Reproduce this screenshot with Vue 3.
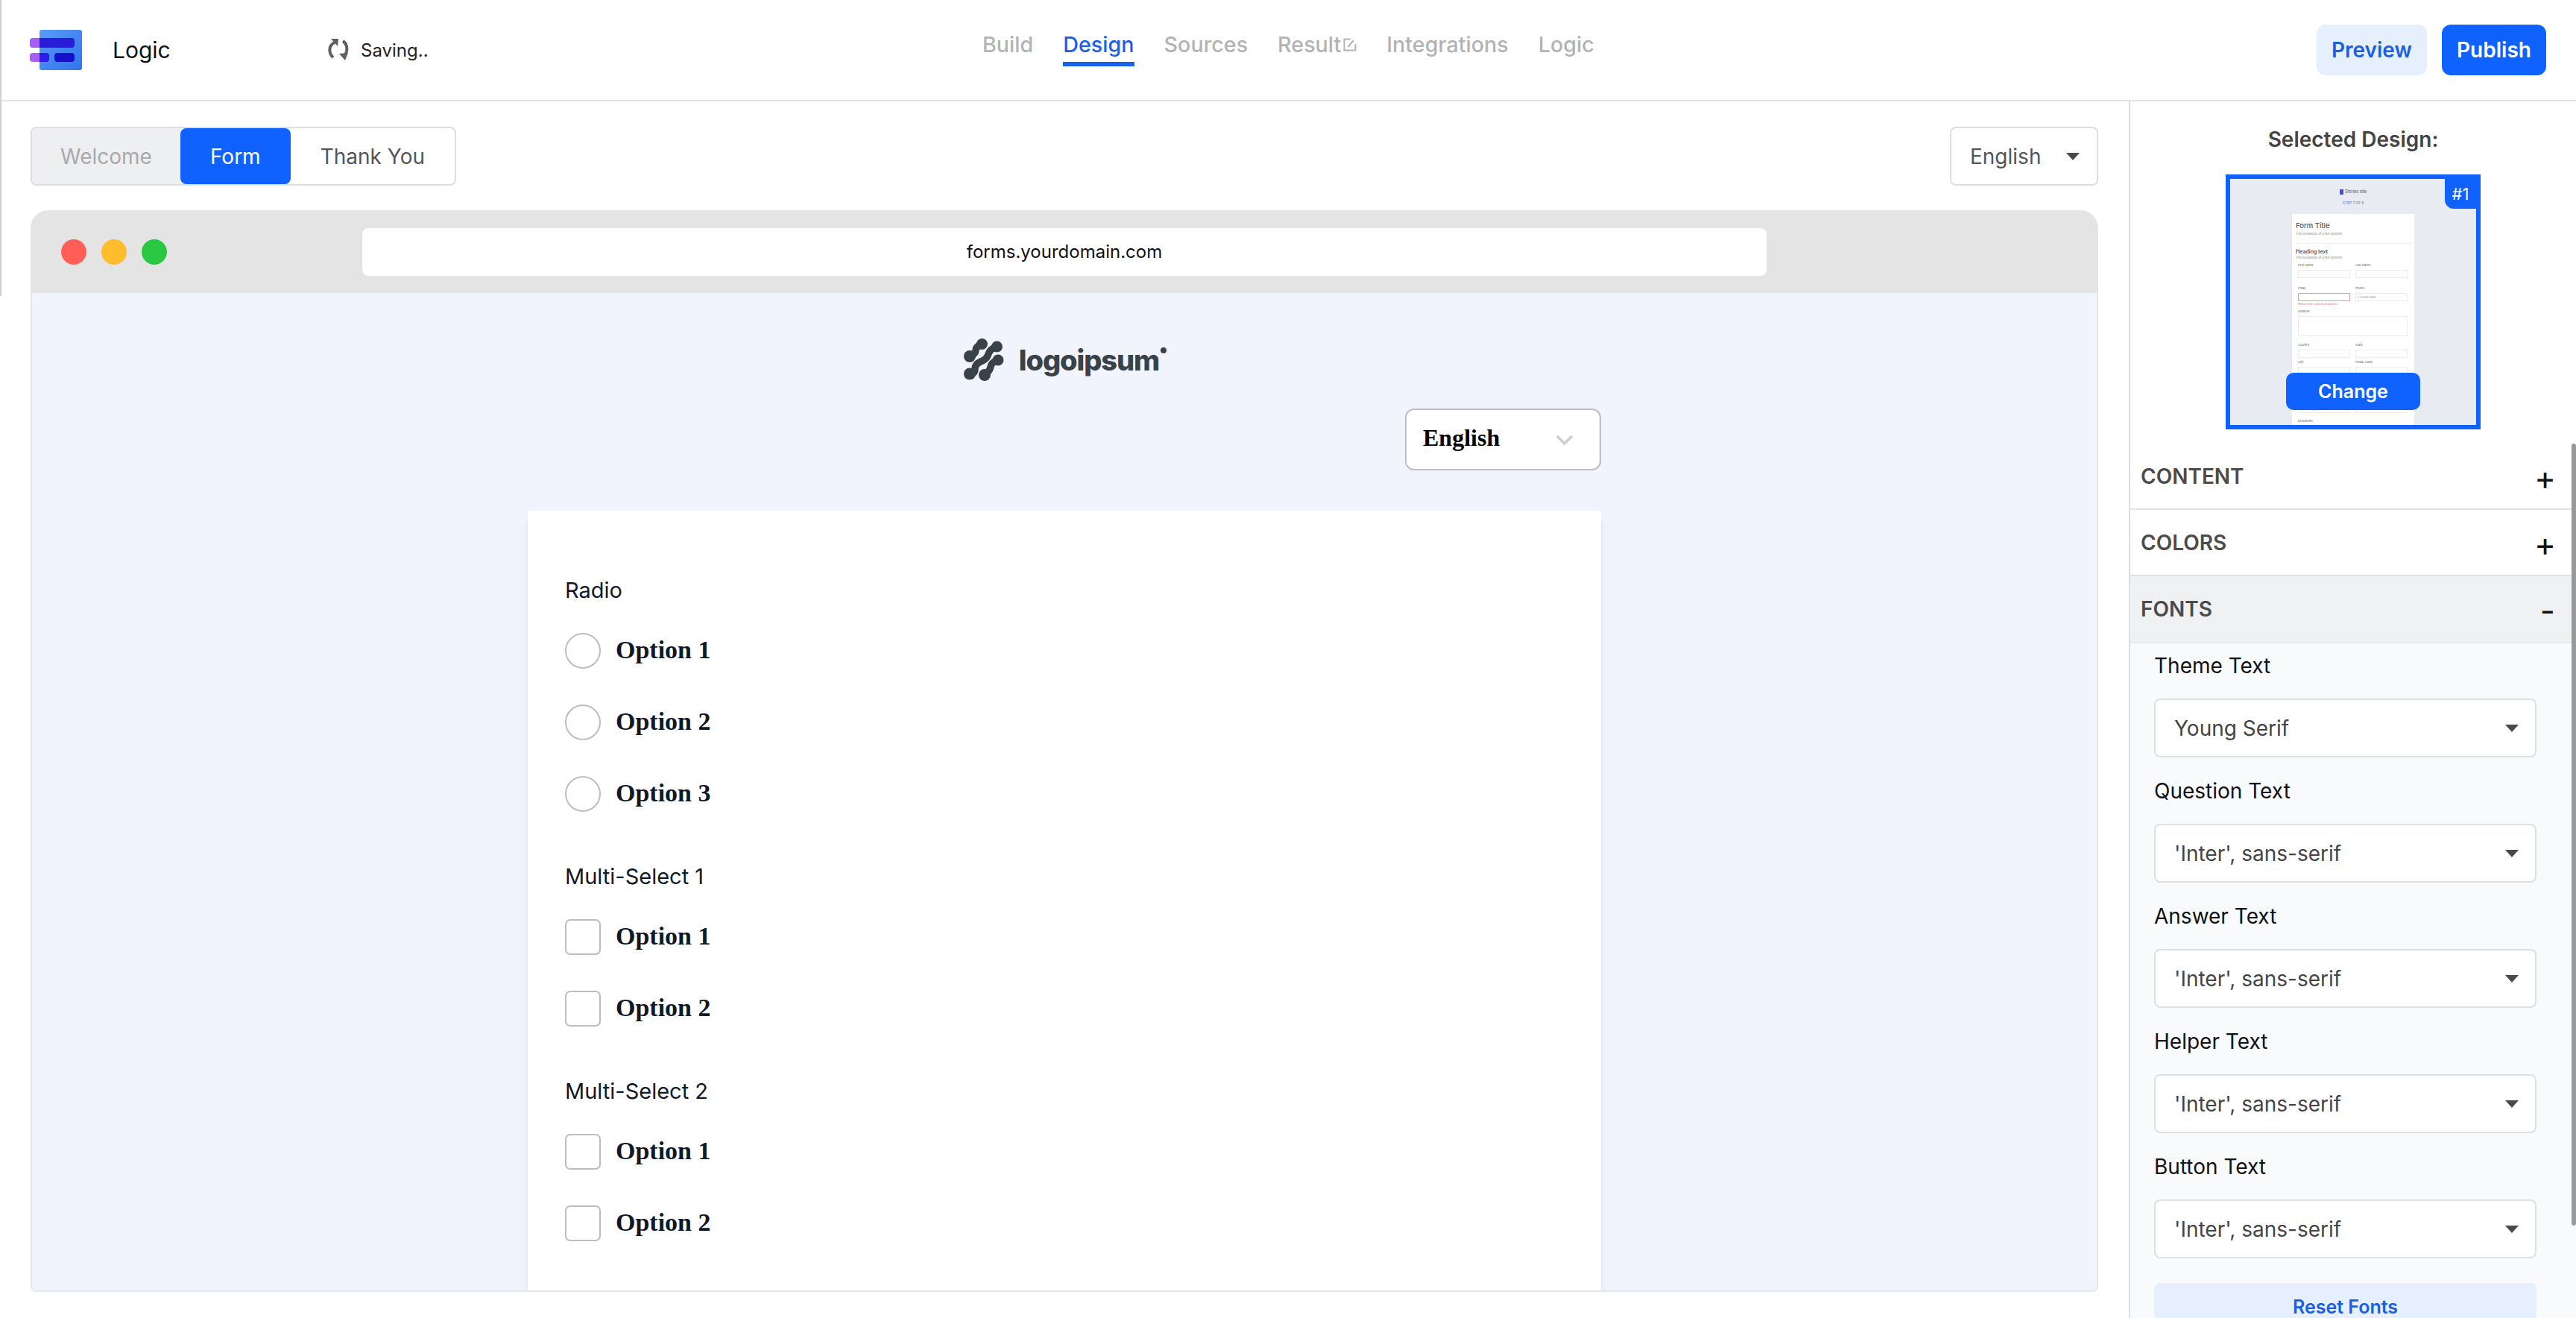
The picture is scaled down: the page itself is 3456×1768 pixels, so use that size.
<template>
  <div class="app">
    <span class="edge-line" />

    <!-- Top bar -->
    <header class="topbar">
      <div class="brand-area">
        <svg class="brand-logo" width="70" height="54" viewBox="0 0 70 54">
          <defs>
            <linearGradient id="brandBlue" x1="0" y1="0" x2="1" y2="1">
              <stop offset="0" stop-color="#5b9bf8" />
              <stop offset="1" stop-color="#2f74ec" />
            </linearGradient>
          </defs>
          <rect x="13" y="0" width="57" height="54" rx="3" fill="url(#brandBlue)" />
          <path d="M13 11H4a4 4 0 0 0-4 4v5a4 4 0 0 0 4 4h9z" fill="#a65ff4" />
          <path d="M13 31H4a4 4 0 0 0-4 4v4a4 4 0 0 0 4 4h9z" fill="#a65ff4" />
          <path d="M13 11h43a4 4 0 0 1 4 4v5a4 4 0 0 1-4 4H13z" fill="#2a1cd8" />
          <path d="M13 31h9a4 4 0 0 1 4 4v4a4 4 0 0 1-4 4H13z" fill="#2f1cec" />
          <rect x="33" y="31" width="27" height="12" rx="4" fill="#1410cc" />
        </svg>
        <span class="brand-name">Logic</span>
        <svg class="save-icon" width="30" height="30" viewBox="0 0 30 30" fill="none">
          <path d="M10 5C1 9 2 20 8 25" stroke="#5f5f5f" stroke-width="4" />
          <path d="M5 0h10l-1 10z" fill="#5f5f5f" />
          <path d="M21 3c7 5 7 15 1 21" stroke="#5f5f5f" stroke-width="4" />
          <path d="M16 20l12-1-4 10z" fill="#5f5f5f" />
        </svg>
        <span class="save-text">Saving..</span>
      </div>

      <nav class="main-nav">
        <a
          v-for="item in navItems"
          :key="item"
          class="nav-link"
          :class="{ active: item === 'Design' }"
        >
          {{ item }}
          <svg v-if="item === 'Result'" class="ext-icon" width="18" height="18" viewBox="0 0 18 18" fill="none">
            <path d="M10 1.500H1.500v15h15V8" stroke="#b4b4b4" stroke-width="2" />
            <path d="M6.500 12L14 3" stroke="#b4b4b4" stroke-width="2" />
          </svg>
        </a>
      </nav>

      <div class="top-actions">
        <button class="btn btn-soft">Preview</button>
        <button class="btn btn-solid">Publish</button>
      </div>
    </header>

    <div class="workspace">
      <main class="canvas-col">
        <div class="canvas-tools">
          <div class="step-tabs">
            <span class="step welcome">Welcome</span>
            <span class="step current">Form</span>
            <span class="step">Thank You</span>
          </div>
          <div class="lang-select">
            <span>English</span>
            <i class="caret" />
          </div>
        </div>

        <!-- Browser mock -->
        <section class="browser">
          <div class="browser-bar">
            <span class="dot red" />
            <span class="dot amber" />
            <span class="dot green" />
            <div class="url-box">forms.yourdomain.com</div>
          </div>

          <div class="browser-body">
            <div class="form-logo">
              <svg width="66" height="66" viewBox="0 0 66 66" fill="#394149" stroke="#394149">
                <g stroke-width="9.500" stroke-linecap="round">
                  <path d="M31.500 11.500Q23 15 23 20T15 28" fill="none" />
                  <path d="M51.500 15Q42 18 40 25T30 35T22 45T15 51.500" fill="none" />
                  <path d="M53 33Q44 36 43 42T35 53" fill="none" />
                </g>
                <g stroke="none">
                  <circle cx="31.500" cy="11.500" r="7.500" />
                  <circle cx="15" cy="28" r="8" />
                  <circle cx="51.500" cy="15" r="7.500" />
                  <circle cx="15" cy="51.500" r="8" />
                  <circle cx="53" cy="33" r="7.500" />
                  <circle cx="35" cy="53" r="8" />
                </g>
              </svg>
              <span class="logo-word">logoipsum</span>
              <span class="logo-dot" />
            </div>

            <div class="form-lang-wrap">
              <div class="form-lang">
                <span>English</span>
                <svg width="26" height="16" viewBox="0 0 26 16" fill="none">
                  <path d="M3 3l10 10L23 3" stroke="#cdcdcd" stroke-width="3.500" />
                </svg>
              </div>
            </div>

            <div class="form-card">
              <div v-for="group in formGroups" :key="group.label" class="form-group">
                <div class="group-label">{{ group.label }}</div>
                <div class="option-list">
                  <label v-for="opt in group.options" :key="opt" class="option-row">
                    <span class="mark" :class="group.type" />
                    <span class="option-text">{{ opt }}</span>
                  </label>
                </div>
              </div>
            </div>
          </div>
        </section>
      </main>

      <!-- Design sidebar -->
      <aside class="sidebar">
        <span class="scroll-thumb" />
        <h4 class="side-title">Selected Design:</h4>

        <div class="design-thumb">
          <span class="thumb-badge">#1</span>
          <button class="thumb-change">Change</button>
          <div class="mini-brand"><i class="mini-logo" />Stories site</div>
          <div class="mini-step"><b>STEP</b> 1 OF 5</div>
          <div class="mini-card">
            <div class="mini-title">Form Title</div>
            <div class="mini-sub">This is example of a text element</div>
            <div class="mini-rule" />
            <div class="mini-heading">Heading text</div>
            <div class="mini-sub flush">This is example of a text element</div>
            <div class="mini-grid">
              <div v-for="f in miniFields" :key="f.label" class="mini-field" :class="f.cls">
                <div class="mini-label">{{ f.label }}</div>
                <div class="mini-input">{{ f.value }}</div>
                <div v-if="f.error" class="mini-error">{{ f.error }}</div>
              </div>
            </div>
          </div>
        </div>

        <div class="panel-row"><span>CONTENT</span><b class="plus">+</b></div>
        <div class="panel-row"><span>COLORS</span><b class="plus">+</b></div>
        <div class="panel-row open"><span>FONTS</span><b class="minus">-</b></div>

        <div class="panel-body">
          <div v-for="row in fontRows" :key="row.label" class="font-field">
            <div class="font-label">{{ row.label }}</div>
            <div class="font-select">
              <span>{{ row.value }}</span>
              <i class="caret" />
            </div>
          </div>
          <button class="reset-btn">Reset Fonts</button>
        </div>
      </aside>
    </div>
  </div>
</template>

<script setup>
const navItems = ['Build', 'Design', 'Sources', 'Result', 'Integrations', 'Logic']

const formGroups = [
  { label: 'Radio', type: 'round', options: ['Option 1', 'Option 2', 'Option 3'] },
  { label: 'Multi-Select 1', type: 'square', options: ['Option 1', 'Option 2'] },
  { label: 'Multi-Select 2', type: 'square', options: ['Option 1', 'Option 2'] }
]

const fontRows = [
  { label: 'Theme Text', value: 'Young Serif' },
  { label: 'Question Text', value: "'Inter', sans-serif" },
  { label: 'Answer Text', value: "'Inter', sans-serif" },
  { label: 'Helper Text', value: "'Inter', sans-serif" },
  { label: 'Button Text', value: "'Inter', sans-serif" }
]

// tiny form inside the design thumbnail
const miniFields = [
  { label: 'First Name' },
  { label: 'Last Name' },
  { label: 'Email', cls: 'bad', error: 'Please enter valid email address' },
  { label: 'Phone', value: '+1 (555) 000' },
  { label: 'Address', cls: 'wide' },
  { label: 'Country', cls: 'tight' },
  { label: 'State', cls: 'tight' },
  { label: 'City', cls: 'tall' },
  { label: 'Postal Code', cls: 'tall' },
  { label: 'Date', cls: 'mid', value: 'mm/dd/yyyy' },
  { label: 'Time', cls: 'mid', value: '--:--' },
  { label: 'Dropdown' }
]
</script>

<style>
html,
body {
  margin: 0;
  background: #fff;
}
</style>

<style scoped>
.app {
  position: relative;
  display: flex;
  flex-direction: column;
  width: 3456px;
  height: 1768px;
  overflow: hidden;
  background: #fff;
  font-family: Inter, "Noto Sans", sans-serif;
  color: #111827;
}

.edge-line {
  position: absolute;
  left: 0;
  top: 0;
  width: 2px;
  height: 397px;
  background: #cfcfcf;
}

/* Top bar */
.topbar {
  flex: none;
  display: flex;
  height: 136px;
  box-sizing: border-box;
  border-bottom: 2px solid #e1e3e6;
}

.brand-area {
  flex: none;
  display: flex;
  align-items: center;
  width: 1318px;
  box-sizing: border-box;
  padding-left: 40px;
}

.brand-name {
  margin-left: 41px;
  width: 288px;
  font-size: 30px;
  color: #111;
}

.save-text {
  margin-left: 15px;
  font-size: 24px;
  color: #222;
}

.main-nav {
  display: flex;
  gap: 40px;
  align-items: flex-start;
  padding-top: 41px;
}

.nav-link {
  display: flex;
  align-items: center;
  height: 36px;
  padding-bottom: 6px;
  border-bottom: 6px solid transparent;
  font-size: 28.700px;
  font-weight: 500;
  color: #b3b3b3;
}

.nav-link.active {
  color: #1a5fe8;
  border-bottom-color: #1a5fe8;
}

.ext-icon {
  margin-left: 3px;
  margin-top: 2px;
}

.top-actions {
  margin-left: auto;
  display: flex;
  align-items: center;
  gap: 20px;
  padding-right: 40px;
}

.btn {
  height: 68px;
  padding: 0;
  border: 0;
  border-radius: 12px;
  font-family: inherit;
  font-size: 28px;
  font-weight: 600;
}

.btn-soft {
  width: 148px;
  background: #e6f0fd;
  color: #1a5fe0;
}

.btn-solid {
  width: 140px;
  background: #0f62fe;
  color: #fff;
}

/* Canvas */
.workspace {
  flex: 1;
  display: flex;
  min-height: 0;
}

.canvas-col {
  flex: none;
  display: flex;
  flex-direction: column;
  width: 2856px;
  box-sizing: border-box;
  padding: 34px 41px 35px;
}

.canvas-tools {
  display: flex;
  justify-content: space-between;
  margin-bottom: 33px;
}

.step-tabs {
  display: flex;
  height: 79px;
  box-sizing: border-box;
  border: 2px solid #dcdee1;
  border-radius: 8px;
  overflow: hidden;
  font-size: 28px;
}

.step {
  display: flex;
  align-items: center;
  padding: 0 40px;
  color: #555;
}

.step.welcome {
  padding: 0 38px;
  background: #eeeff1;
  color: #a9a9a9;
}

.step.current {
  background: #0f62fe;
  color: #fff;
  border-radius: 8px;
}

.lang-select {
  display: flex;
  align-items: center;
  justify-content: space-between;
  width: 199px;
  height: 79px;
  box-sizing: border-box;
  padding: 0 23px 0 25px;
  border: 2px solid #dcdee1;
  border-radius: 8px;
  font-size: 28px;
  color: #555;
}

.caret {
  display: block;
  width: 0;
  height: 0;
  border-left: 9px solid transparent;
  border-right: 9px solid transparent;
  border-top: 10px solid #4a4a4a;
}

.browser {
  flex: 1;
  display: flex;
  flex-direction: column;
  min-height: 0;
}

.browser-bar {
  flex: none;
  display: flex;
  align-items: center;
  gap: 20px;
  height: 111px;
  padding-left: 41px;
  background: #e4e4e4;
  border-radius: 24px 24px 0 0;
}

.dot {
  width: 34px;
  height: 34px;
  border-radius: 50%;
}

.red {
  background: #ff5f57;
}

.amber {
  background: #ffbd2e;
}

.green {
  background: #28c840;
}

.url-box {
  display: flex;
  align-items: center;
  justify-content: center;
  width: 1884px;
  height: 64px;
  margin-left: 242px;
  background: #fff;
  border-radius: 8px;
  font-size: 24px;
  color: #111;
}

.browser-body {
  flex: 1;
  display: flex;
  flex-direction: column;
  align-items: center;
  min-height: 0;
  overflow: hidden;
  padding-top: 57px;
  background: #f2f4fd;
  border: 2px solid #e5e7eb;
  border-top: 0;
  border-radius: 0 0 8px 8px;
}

.form-logo {
  display: flex;
  align-items: center;
  height: 66px;
  flex: none;
  padding-right: 5px;
}

.logo-word {
  margin-left: 15px;
  font-size: 38px;
  font-weight: 800;
  letter-spacing: -1.100px;
  color: #394149;
}

.logo-dot {
  width: 8px;
  height: 8px;
  margin: -26px 0 0 2px;
  border-radius: 50%;
  background: #394149;
}

.form-lang-wrap {
  flex: none;
  display: flex;
  justify-content: flex-end;
  width: 1440px;
  margin-top: 32px;
}

.form-lang {
  display: flex;
  align-items: center;
  justify-content: space-between;
  width: 263px;
  height: 83px;
  box-sizing: border-box;
  padding: 0 34px 0 22px;
  background: #fff;
  border: 2px solid #bdbdc3;
  border-radius: 12px;
  font-family: "Liberation Serif", serif;
  font-size: 32px;
  font-weight: 700;
  color: #000;
}

.form-lang span {
  margin-top: -5px;
}

.form-card {
  flex: 1;
  width: 1440px;
  margin-top: 54px;
  padding: 87px 50px 0;
  box-sizing: border-box;
  background: #fff;
  box-shadow: 0 10px 10px rgba(60, 70, 120, 0.1);
}

.form-group {
  margin-bottom: 67px;
}

.group-label {
  height: 40px;
  line-height: 40px;
  margin-bottom: 37px;
  font-size: 29px;
}

.option-list {
  display: flex;
  flex-direction: column;
  gap: 48px;
}

.option-row {
  display: flex;
  align-items: center;
  height: 48px;
}

.mark {
  flex: none;
  width: 48px;
  height: 48px;
  box-sizing: border-box;
  border: 2px solid #bdbdbd;
  background: #fff;
}

.mark.round {
  border-radius: 50%;
}

.mark.square {
  border-radius: 7px;
}

.option-text {
  margin: -3px 0 0 20px;
  font-family: "Liberation Serif", serif;
  font-size: 34px;
  font-weight: 700;
  color: #111827;
}

/* Sidebar */
.sidebar {
  position: relative;
  flex: none;
  width: 600px;
  box-sizing: border-box;
  border-left: 2px solid #d9dce0;
  overflow: hidden;
}

.scroll-thumb {
  position: absolute;
  right: 0;
  top: 459px;
  width: 6px;
  height: 1049px;
  border-radius: 3px;
  background: #999;
}

.side-title {
  margin: 33px 0 29px;
  line-height: 36px;
  text-align: center;
  font-size: 28px;
  font-weight: 600;
  color: #444;
}

.design-thumb {
  position: relative;
  width: 342px;
  height: 342px;
  box-sizing: border-box;
  margin: 0 0 19px 128px;
  border: 6px solid #0f62fe;
  background: #e9ebf2;
  overflow: hidden;
}

.thumb-badge {
  position: absolute;
  right: 0;
  top: 0;
  width: 42px;
  height: 40px;
  line-height: 40px;
  text-align: center;
  background: #0f62fe;
  border-bottom-left-radius: 12px;
  font-size: 22px;
  color: #fff;
}

.thumb-change {
  position: absolute;
  left: 75px;
  top: 260px;
  width: 180px;
  height: 50px;
  border: 0;
  border-radius: 10px;
  background: #0f62fe;
  font-family: inherit;
  font-size: 25px;
  font-weight: 600;
  color: #fff;
}

.mini-brand {
  display: flex;
  align-items: center;
  justify-content: center;
  gap: 2px;
  height: 12px;
  margin-top: 11px;
  font-size: 5.500px;
  color: #555;
}

.mini-logo {
  width: 5px;
  height: 7px;
  background: #3f4fd0;
}

.mini-step {
  margin-top: 5px;
  height: 9px;
  line-height: 9px;
  text-align: center;
  font-size: 5px;
  color: #777;
}

.mini-step b {
  font-weight: 400;
  color: #4a7ff0;
}

.mini-card {
  box-sizing: border-box;
  width: 164px;
  margin: 10px auto 0;
  padding: 10px 5px 0;
  background: #fff;
}

.mini-title {
  height: 12px;
  line-height: 12px;
  font-size: 9.500px;
  font-weight: 500;
  color: #555;
}

.mini-sub {
  height: 6px;
  line-height: 6px;
  margin-top: 2px;
  font-size: 4px;
  color: #888;
}

.mini-sub.flush {
  margin-top: 0;
}

.mini-rule {
  height: 1px;
  margin: 9px -2px 6px 0;
  background: #eee;
}

.mini-heading {
  height: 10px;
  line-height: 10px;
  font-size: 7px;
  font-weight: 600;
  color: #555;
}

.mini-grid {
  display: grid;
  grid-template-columns: 70px 70px;
  column-gap: 7px;
  padding: 4px 0 0 3px;
}

.mini-field {
  min-height: 31px;
}

.mini-field.wide {
  grid-column: 1 / 3;
  min-height: 45px;
}

.mini-field.wide .mini-input {
  height: 27px;
}

.mini-field.tight {
  min-height: 23px;
}

.mini-field.tall {
  min-height: 51px;
}

.mini-field.mid {
  min-height: 28px;
}

.mini-label {
  height: 6px;
  line-height: 6px;
  font-size: 4px;
  color: #666;
}

.mini-input {
  box-sizing: border-box;
  height: 11px;
  line-height: 9px;
  margin-top: 3px;
  padding-left: 2px;
  border: 1px solid #ececf0;
  font-size: 4px;
  color: #888;
}

.mini-field.bad .mini-input {
  border-color: #e99;
}

.mini-error {
  line-height: 6px;
  margin-top: 1px;
  font-size: 3.500px;
  color: #e66;
}

.panel-row {
  display: flex;
  align-items: center;
  justify-content: space-between;
  height: 89px;
  box-sizing: border-box;
  padding: 0 27px 0 14px;
  border-bottom: 2px solid #e1e3e6;
  font-size: 28px;
  font-weight: 600;
  color: #4b4b4b;
}

.panel-row.open {
  height: 90px;
  padding-right: 28px;
  background: #f0f1f3;
  border-bottom-color: #e9ebee;
}

.plus,
.minus {
  margin-top: 4px;
  line-height: 1;
  font-size: 44px;
  font-weight: 400;
  color: #111;
}

.panel-body {
  padding: 12px 53px 0 32px;
  background: #f8fafc;
}

.font-field {
  height: 168px;
}

.font-label {
  height: 36px;
  line-height: 36px;
  margin-bottom: 26px;
  font-size: 28px;
  color: #111;
}

.font-select {
  display: flex;
  align-items: center;
  justify-content: space-between;
  height: 79px;
  box-sizing: border-box;
  padding: 0 22px 0 25px;
  background: #fff;
  border: 2px solid #dcdfe3;
  border-radius: 8px;
  font-size: 28px;
  color: #444;
}

.reset-btn {
  display: block;
  width: 100%;
  height: 64px;
  margin-top: 6px;
  border: 0;
  border-radius: 8px;
  background: #e5effd;
  font-family: inherit;
  font-size: 25px;
  font-weight: 600;
  color: #1a5fe0;
}
</style>
